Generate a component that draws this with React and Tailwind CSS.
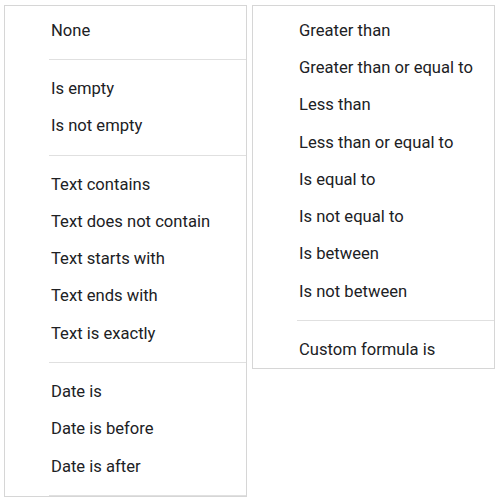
import React from 'react';

const LEFT = [
  ['None'],
  ['Is empty', 'Is not empty'],
  ['Text contains', 'Text does not contain', 'Text starts with', 'Text ends with', 'Text is exactly'],
  ['Date is', 'Date is before', 'Date is after'],
  [],
];

const RIGHT = [
  [
    'Greater than',
    'Greater than or equal to',
    'Less than',
    'Less than or equal to',
    'Is equal to',
    'Is not equal to',
    'Is between',
    'Is not between',
  ],
  ['Custom formula is'],
];

const Menu = ({ groups, className }) => (
  <div className={`border border-[#d6d6d6] bg-white pt-[6px] overflow-hidden ${className}`}>
    {groups.map((group, gi) => (
      <div key={gi}>
        {gi > 0 && <div className="ml-[44px] my-[10px] h-px bg-[#e0e0e0]" />}
        {group.map((label) => (
          <div
            key={label}
            className="h-[37.3px] flex items-center pl-[46px] pt-px text-[16.6px] text-[#202124]"
          >
            {label}
          </div>
        ))}
      </div>
    ))}
  </div>
);

export default function App() {
  return (
    <div
      className="w-[500px] h-[500px] bg-white flex items-start gap-[5px] pt-[5px] pl-[4px]"
      style={{ fontFamily: 'Roboto, "Noto Sans", sans-serif' }}
    >
      <Menu groups={LEFT} className="w-[243px] h-[492px]" />
      <Menu groups={RIGHT} className="w-[243px] h-[364px]" />
    </div>
  );
}
